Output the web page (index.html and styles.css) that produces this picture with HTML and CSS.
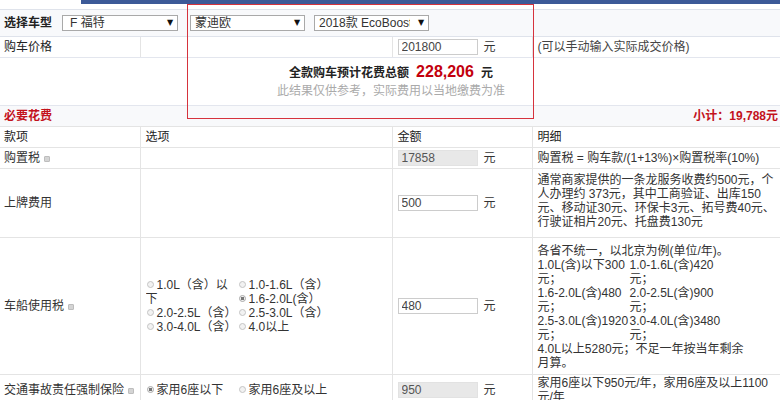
FILE: index.html
```html
<!DOCTYPE html>
<html lang="zh-CN">
<head>
  <meta charset="UTF-8">
  <title>购车计算器</title>
  <link rel="stylesheet" href="styles.css">
</head>
<body>
  <div class="topbar"><div class="topbar-tab"></div></div>

  <table class="calc-table">
    <colgroup>
      <col class="col-item">
      <col class="col-option">
      <col class="col-amount">
      <col class="col-detail">
    </colgroup>

    <!-- 车型选择 -->
    <tr class="row-model">
      <td colspan="4">
        <div class="model-bar">
          <span class="model-label">选择车型</span>
          <div class="fake-select select-brand"><span class="select-text">F 福特</span><span class="select-arrow">▼</span></div>
          <div class="fake-select select-series"><span class="select-text">蒙迪欧</span><span class="select-arrow">▼</span></div>
          <div class="fake-select select-spec"><span class="select-text">2018款 EcoBoost 180 豪华型</span><span class="select-arrow">▼</span></div>
        </div>
      </td>
    </tr>

    <tr class="row-price">
      <td class="price-label">购车价格</td>
      <td></td>
      <td class="amount-cell"><input class="amount" type="text" value="201800"><span class="unit">元</span></td>
      <td class="price-hint">(可以手动输入实际成交价格)</td>
    </tr>

    <tr class="row-total">
      <td colspan="4">
        <p class="total">全款购车预计花费总额<strong>228,206</strong>元</p>
        <p class="total-note">此结果仅供参考，实际费用以当地缴费为准</p>
      </td>
    </tr>

    <tr class="row-section">
      <td colspan="4">
        <div class="section-bar">
          <span class="section-title">必要花费</span>
          <span class="subtotal">小计：19,788元</span>
        </div>
      </td>
    </tr>

    <tr class="row-head">
      <th>款项</th>
      <th>选项</th>
      <th>金额</th>
      <th>明细</th>
    </tr>

    <tr>
      <td>购置税<span class="tip"></span></td>
      <td></td>
      <td class="amount-cell"><input class="amount" type="text" value="17858" readonly><span class="unit">元</span></td>
      <td>购置税 = 购车款/(1+13%)×购置税率(10%)</td>
    </tr>

    <tr>
      <td>上牌费用</td>
      <td></td>
      <td class="amount-cell"><input class="amount" type="text" value="500"><span class="unit">元</span></td>
      <td class="detail">通常商家提供的一条龙服务收费约500元，个人办理约 373元，其中工商验证、出库150元、移动证30元、环保卡3元、拓号费40元、行驶证相片20元、托盘费130元</td>
    </tr>

    <tr>
      <td>车船使用税<span class="tip"></span></td>
      <td>
        <div class="options">
          <label><input type="radio" name="cc">1.0L（含）以下</label>
          <label><input type="radio" name="cc">1.0-1.6L（含）</label>
          <label><input type="radio" name="cc" checked>1.6-2.0L(含）</label>
          <label><input type="radio" name="cc">2.0-2.5L（含）</label>
          <label><input type="radio" name="cc">2.5-3.0L（含）</label>
          <label><input type="radio" name="cc">3.0-4.0L（含）</label>
          <label><input type="radio" name="cc">4.0以上</label>
        </div>
      </td>
      <td class="amount-cell"><input class="amount" type="text" value="480"><span class="unit">元</span></td>
      <td class="detail detail-tax">
        <div class="tax-detail">
          <p>各省不统一，以北京为例(单位/年)。</p>
          <div class="tax-grid">
            <span>1.0L(含)以下300元；</span>
            <span>1.0-1.6L(含)420元；</span>
            <span>1.6-2.0L(含)480元；</span>
            <span>2.0-2.5L(含)900元；</span>
            <span>2.5-3.0L(含)1920元；</span>
            <span>3.0-4.0L(含)3480元；</span>
          </div>
          <p>4.0L以上5280元；不足一年按当年剩余月算。</p>
        </div>
      </td>
    </tr>

    <tr>
      <td class="nowrap">交通事故责任强制保险<span class="tip"></span></td>
      <td>
        <div class="options">
          <label><input type="radio" name="seat" checked>家用6座以下</label>
          <label><input type="radio" name="seat">家用6座及以上</label>
        </div>
      </td>
      <td class="amount-cell"><input class="amount" type="text" value="950" readonly><span class="unit">元</span></td>
      <td class="detail detail-seat">家用6座以下950元/年，家用6座及以上1100元/年</td>
    </tr>
  </table>

  <!-- 标注框 -->
  <div class="highlight"></div>
</body>
</html>
```

FILE: styles.css
```css
* {
  margin: 0;
  padding: 0;
  box-sizing: border-box;
}

body {
  font-family: "Liberation Sans", "Noto Sans CJK SC", sans-serif;
  font-size: 12px;
  line-height: 14px;
  color: #333;
  background-color: #fff;
  position: relative;
}

.topbar {
  height: 4px;
  background-color: #3c5a98;
  margin-bottom: 5px;
}

.topbar-tab {
  width: 81px;
  height: 4px;
  background-color: #fff;
}

.calc-table {
  width: 780px;
  border-collapse: collapse;
  table-layout: fixed;
}

.col-item { width: 140px; }
.col-option { width: 252px; }
.col-amount { width: 140px; }
.col-detail { width: 248px; }

.calc-table td,
.calc-table th {
  padding: 3px 5px;
  border: 1px solid #e4e4e4;
  text-align: left;
  vertical-align: middle;
  font-weight: normal;
}

.calc-table td:first-child,
.calc-table th:first-child {
  border-left: none;
  padding-left: 4px;
  padding-right: 2px;
}

.calc-table td:last-child,
.calc-table th:last-child {
  border-right: none;
}

.nowrap {
  white-space: nowrap;
}

/* 顶部选择 */
.row-model td {
  background-color: #f8f9fb;
  border-top-color: #dfe3eb;
  border-bottom-color: #dfe3eb;
  padding: 5px 4px;
}

.model-bar {
  display: flex;
  align-items: center;
}

.model-label {
  font-weight: bold;
  color: #222;
  margin-right: 10px;
}

.fake-select {
  display: flex;
  align-items: center;
  height: 16px;
  border: 1px solid #a9a9a9;
  background-color: #fff;
  padding-left: 7px;
}

.select-text {
  flex: 1;
  overflow: hidden;
  white-space: nowrap;
}

.select-arrow {
  width: 14px;
  font-family: "DejaVu Sans", sans-serif;
  font-size: 8px;
  color: #111;
  text-align: center;
}

.select-brand { width: 116px; }
.select-series { width: 115px; margin-left: 12px; padding-left: 4px; }
.select-spec { width: 115px; margin-left: 9px; padding-left: 4px; }

.select-spec .select-text {
  flex: none;
  width: 91px;
  margin-right: 4px;
}

.row-price td {
  padding: 2px 5px;
  border-bottom-color: #e3e6ee;
}

.price-label {
  font-weight: bold;
  color: #222;
}

.price-hint {
  color: #444;
}

.row-total td {
  text-align: center;
  padding: 4px 0 6px;
  border-bottom-color: #e3e6ee;
}

.total {
  font-weight: bold;
  line-height: 20px;
  color: #222;
}

.total strong {
  font-size: 16px;
  color: #c3000d;
  margin: 0 7px;
}

.total-note {
  color: #aaa;
  line-height: 16px;
}

.row-section td {
  background-color: #f8f9fb;
  padding: 3px 4px;
}

.section-bar {
  display: flex;
  justify-content: space-between;
  font-weight: bold;
  color: #c3121c;
}

.row-head th {
  color: #222;
}

.tip {
  display: inline-block;
  width: 6px;
  height: 6px;
  margin-left: 4px;
  border-radius: 1px;
  background-color: #d4d4d4;
  border: 1px solid #bdbdbd;
  vertical-align: middle;
}

.calc-table .amount-cell {
  padding-top: 2px;
  padding-bottom: 2px;
}

.amount {
  width: 80px;
  height: 16px;
  padding: 0 3px;
  border: 1px solid #ccc;
  font-family: "Liberation Sans", sans-serif;
  font-size: 12px;
  color: #444;
  vertical-align: middle;
  outline: none;
}

.amount[readonly] {
  background-color: #e8e8e8;
  border-color: #e2e2e2;
  color: #555;
}

.unit {
  margin-left: 6px;
  vertical-align: middle;
}

.calc-table .detail {
  padding-top: 4px;
  padding-bottom: 8px;
  padding-right: 2px;
}

.calc-table .detail-tax {
  padding-top: 6px;
  padding-bottom: 4px;
}

.calc-table .detail-seat {
  padding-top: 1px;
  padding-bottom: 1px;
}

/* 选项：两列浮动 */
.options {
  width: 184px;
  overflow: hidden;
  line-height: 14px;
}

.options label {
  float: left;
  width: 92px;
}

.options input[type="radio"] {
  appearance: none;
  -webkit-appearance: none;
  width: 7px;
  height: 7px;
  margin: -2px 3px 0 1px;
  border: 1px solid #c4c4c4;
  border-radius: 50%;
  background-color: #f2f2f2;
  vertical-align: middle;
}

.options input[type="radio"]:checked {
  background: radial-gradient(circle, #777 0, #777 1.5px, #f2f2f2 2px);
  border-color: #aaa;
}

.tax-detail {
  width: 210px;
}

.tax-grid {
  display: grid;
  grid-template-columns: 92px 92px;
}

/* 红色标注框 */
.highlight {
  position: absolute;
  left: 187px;
  top: 4px;
  width: 347px;
  height: 115px;
  border: 1px solid #d6333d;
  pointer-events: none;
}
```
